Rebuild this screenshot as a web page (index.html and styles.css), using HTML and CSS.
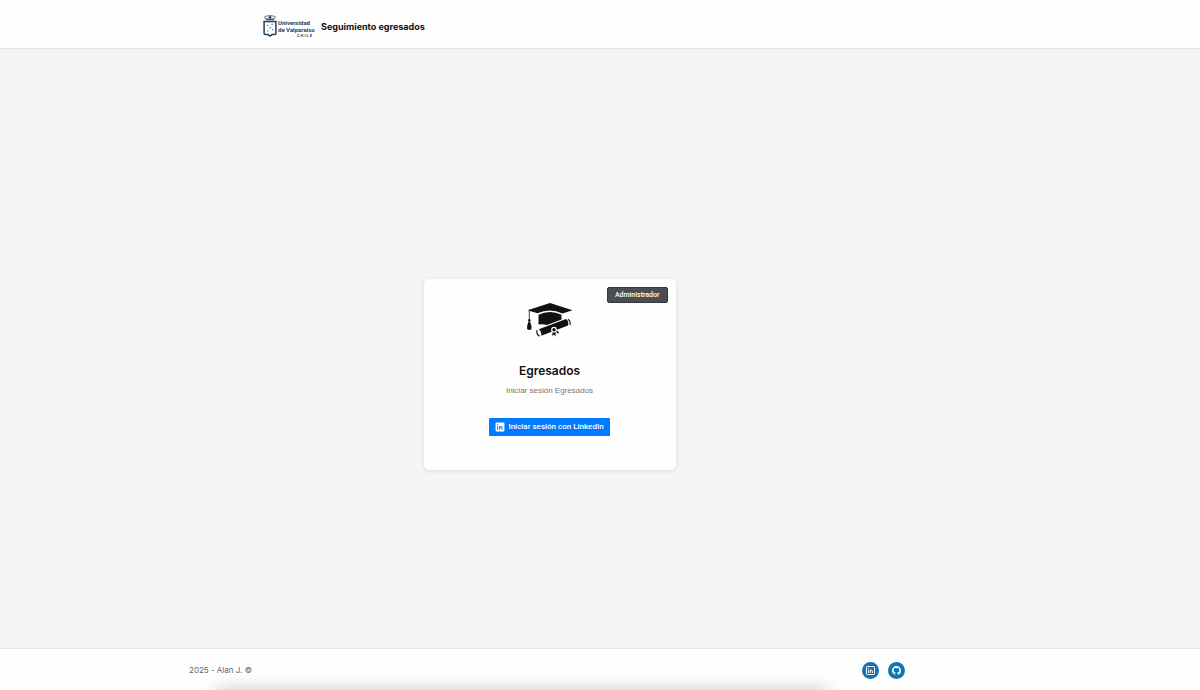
FILE: index.html
```html
<!DOCTYPE html>
<html lang="es">
<head>
<meta charset="utf-8">
<meta name="viewport" content="width=device-width, initial-scale=1">
<title>Seguimiento egresados</title>
<link rel="stylesheet" href="styles.css">
</head>
<body>
<header class="header">
  <div class="header-inner">
    <div class="brand">
      <svg class="brand-crest" viewBox="0 0 14 22" aria-hidden="true" fill="none" stroke="#1f405f">
        <ellipse cx="7" cy="2.400" rx="5.600" ry="1.700" stroke-width="1" stroke="#5b7289"/>
        <circle cx="7" cy="2.400" r="1.300" fill="#1f405f" stroke="none"/>
        <path d="M3 4.700h8" stroke-width="1"/>
        <path d="M1.100 6.400h11.800v12.200q0 1-1 1H9L7 21l-2-1.400H2.100q-1 0-1-1z" stroke-width="1.500"/>
        <path d="M4 10.500h1.200M8.500 9.300h1.200M6.600 12.600h1.200M9 14.800h1.200M4.200 16h1.200" stroke-width="1.200" stroke="#4b789d"/>
      </svg>
      <div class="brand-words">
        <span>Universidad</span>
        <span>de Valparaíso</span>
        <span class="brand-country">CHILE</span>
      </div>
    </div>
    <h1 class="site-title">Seguimiento egresados</h1>
  </div>
</header>

<main class="main">
  <section class="card">
    <button class="admin-button" type="button">Administrador</button>
    <svg class="grad-icon" viewBox="0 0 48 36" aria-hidden="true" fill="#111">
      <path d="M1.500 8.200 24 1 46.500 8.200 36.500 11.500Q24 5.500 11.500 11.300Z"/>
      <path d="M12.500 12.700Q24 7.500 35.500 12.700V17.400L21 22.900Q17 22 12.500 22.500Z"/>
      <path d="M3.300 9v8.600" fill="none" stroke="#111" stroke-width=".8"/>
      <circle cx="3.300" cy="18.300" r="1.200"/>
      <path d="M2.600 19.300h1.400q1.900 4.700 1.500 7.800-2.200 2-4.400 0-.4-3.100 1.500-7.800z"/>
      <path d="M12.800 27.200 40 17Q43.300 19.200 42 23.600L15.200 33.800Q16 30 12.800 27.200Z"/>
      <path d="M11 28q-.9 4 2.500 6.300M42 17.200q3 2 2 5.800" fill="none" stroke="#111" stroke-width="1.100"/>
      <path d="m26.200 29.200-.3 5.200 2.100-1.500 1.800 1.800.3-4.200 2.800 1.900.1-2.100-2.200-2.500z" stroke="#fff" stroke-width=".7"/>
      <circle cx="28" cy="27.700" r="2.300" fill="#111" stroke="#fff" stroke-width="1.200"/>
    </svg>
    <h2 class="card-title">Egresados</h2>
    <p class="card-text">Iniciar sesión Egresados</p>
    <button class="login-button" type="button">
      <svg class="login-icon" viewBox="0 0 18 18" aria-hidden="true">
        <rect x="1" y="1" width="16" height="16" rx="1.500" fill="#fff"/>
        <path d="M4.700 7.500V14M8.200 7.500V14M8.200 10.600Q8.400 8.300 10.500 8.300T12.800 10.600V14" fill="none" stroke="#007bff" stroke-width="1.900"/>
        <circle cx="4.700" cy="4.700" r="1.200" fill="#007bff"/>
      </svg>
      Iniciar sesión con LinkedIn
    </button>
  </section>
</main>

<footer class="footer">
  <div class="footer-inner">
    <p class="copyright">2025 - Alan J. ©</p>
    <nav class="social" aria-label="Redes sociales">
      <a class="social-link" href="#linkedin" aria-label="LinkedIn">
        <svg viewBox="0 0 18 18" aria-hidden="true">
          <rect x="1" y="1" width="16" height="16" rx="1.500" fill="none" stroke="#fff" stroke-width="2"/>
          <path d="M5.200 7.500V14M8.600 7.500V14M8.600 10.400Q8.800 8.300 10.700 8.300T12.900 10.400V14" fill="none" stroke="#fff" stroke-width="1.900"/>
          <circle cx="5.200" cy="5" r="1.200" fill="#fff"/>
        </svg>
      </a>
      <a class="social-link" href="#github" aria-label="GitHub">
        <svg viewBox="0 0 16 16" aria-hidden="true">
          <path fill="#fff" d="M8 0C3.580 0 0 3.580 0 8c0 3.540 2.290 6.530 5.470 7.590.4.070.55-.17.55-.38 0-.19-.01-.82-.01-1.490-2.010.37-2.530-.49-2.690-.94-.09-.23-.48-.94-.82-1.130-.28-.15-.68-.52-.01-.53.63-.01 1.080.58 1.230.82.72 1.210 1.870.87 2.330.66.07-.52.28-.87.51-1.070-1.780-.2-3.640-.89-3.640-3.950 0-.87.31-1.590.82-2.150-.08-.2-.36-1.020.08-2.120 0 0 .67-.21 2.200.82.64-.18 1.320-.27 2-.27s1.360.09 2 .27c1.530-1.040 2.200-.82 2.200-.82.44 1.100.16 1.920.08 2.120.51.56.82 1.270.82 2.150 0 3.070-1.870 3.750-3.650 3.950.29.25.54.73.54 1.480 0 1.070-.01 1.930-.01 2.200 0 .21.15.46.55.38A8.010 8.010 0 0 0 16 8c0-4.420-3.580-8-8-8z"/>
        </svg>
      </a>
    </nav>
  </div>
  <div class="edge-shadow"></div>
</footer>
</body>
</html>
```
FILE: styles.css
```css
* {
  box-sizing: border-box;
}

body {
  display: flex;
  flex-direction: column;
  min-height: 100vh;
  margin: 0;
  background: #f5f5f5;
  color: #111;
  font-family: Inter, "Liberation Sans", sans-serif;
}

h1, h2, p {
  margin: 0;
}

button {
  border: 0;
  font-family: Roboto, "Liberation Sans", sans-serif;
  cursor: pointer;
}

.header {
  padding-right: 101px;
  background: #fefefe;
  border-bottom: 1px solid #e4e4e4;
}

.header-inner {
  display: flex;
  align-items: center;
  gap: 8px;
  max-width: 573px;
  height: 48px;
  margin: 0 auto;
  padding-top: 5px;
}

.brand {
  display: flex;
  gap: 1px;
  color: #1f405f;
}

.brand-crest {
  width: 14px;
  height: 22px;
}

.brand-words {
  display: flex;
  flex-direction: column;
  width: 35px;
  padding-top: 4px;
  font-family: Roboto, sans-serif;
  font-size: 6px;
  font-weight: 700;
  line-height: 7px;
  white-space: nowrap;
}

.brand-words .brand-country {
  align-self: flex-end;
  font-size: 4px;
  line-height: 6px;
  letter-spacing: 1px;
}

.site-title {
  font-size: 9px;
  font-weight: 700;
  line-height: 14px;
}

.main {
  display: flex;
  flex: 1;
  align-items: center;
  justify-content: center;
  padding: 51px 101px 0 0;
}

.card {
  position: relative;
  display: flex;
  flex-direction: column;
  align-items: center;
  width: 252px;
  padding: 23px 16px 34px;
  background: #fefefe;
  border-radius: 5px;
  box-shadow: 0 1px 5px rgba(0, 0, 0, .11);
}

.admin-button {
  position: absolute;
  top: 8px;
  right: 8px;
  height: 16px;
  padding: 0 7px;
  border: 1px solid #34383c;
  border-radius: 2px;
  background: #4b4d50;
  color: #fff;
  font-size: 7px;
  font-weight: 500;
  line-height: 14px;
}

.grad-icon {
  width: 48px;
  height: 36px;
}

.card-title {
  margin-top: 25px;
  font-size: 12px;
  font-weight: 600;
  line-height: 16px;
}

.card-text {
  margin-top: 6px;
  color: #777;
  font-family: "Liberation Sans", sans-serif;
  font-size: 8px;
  line-height: 12px;
}

.login-button {
  display: flex;
  align-items: center;
  gap: 3px;
  height: 18px;
  margin-top: 21px;
  padding: 0 6px;
  border-radius: 1px;
  background: #007bff;
  color: #fff;
  font-size: 8px;
  font-weight: 500;
  line-height: 16px;
}

.login-icon {
  width: 10px;
  height: 10px;
}

.footer {
  position: relative;
  overflow: hidden;
  padding-right: 101px;
  border-top: 1px solid #e4e4e4;
  background: #fefefe;
}

.edge-shadow {
  position: absolute;
  top: 100%;
  right: 31%;
  left: 18%;
  height: 30px;
  border-radius: 8px;
  box-shadow: 0 0 18px rgba(0, 0, 0, .24);
}

.footer-inner {
  display: flex;
  align-items: center;
  justify-content: space-between;
  max-width: 721px;
  height: 41px;
  margin: 0 auto;
  padding: 1px 5px 0 0;
}

.copyright {
  color: #666;
  font-size: 8px;
  line-height: 12px;
}

.social {
  display: flex;
  gap: 9px;
}

.social-link {
  display: flex;
  align-items: center;
  justify-content: center;
  width: 17px;
  height: 17px;
  border-radius: 50%;
  background: #1273b5;
}

.social-link svg {
  width: 9px;
  height: 9px;
}
```
